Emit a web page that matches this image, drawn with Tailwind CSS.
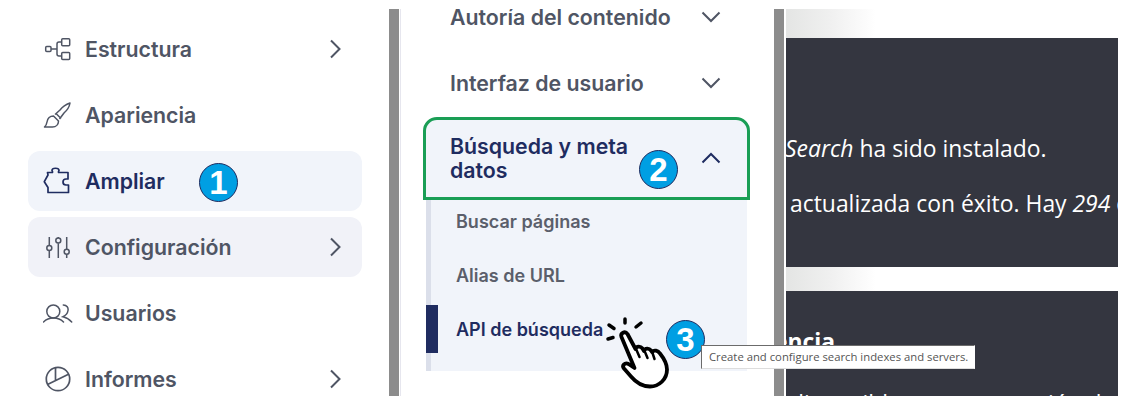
<!DOCTYPE html>
<html><head><meta charset="utf-8"><script src="https://cdn.jsdelivr.net/npm/@tailwindcss/browser@4"></script></head>
<body class="bg-white overflow-hidden font-['Inter',sans-serif]">
<div class="relative w-[1133px] h-[405px] pt-[9px]">
<div class="flex h-[387px] overflow-hidden">
  <!-- left -->
  <nav class="w-[389px] shrink-0 pt-[10px] pl-[28px] pr-[27px] flex flex-col gap-[6px] text-[21.3px] font-semibold text-[#4f5564]">
    <div class="h-[60px] shrink-0 rounded-[12px] flex items-center pl-[15px] pr-[19px]">
      <svg class="w-[28px] h-[28px] mr-[14px] shrink-0" viewBox="0 0 28 28" fill="none" stroke="#4f5564" stroke-width="1.5"><rect x="2.7" y="11.5" width="5.300" height="5" rx="1"/><path d="M8 14H14M18.700 7h-2.700a2 2 0 0 0-2 2v10a2 2 0 0 0 2 2h2.700"/><rect x="18.700" y="3.800" width="8" height="7" rx="1"/><rect x="18.700" y="17.500" width="8" height="7" rx="1"/></svg>
      <span class="flex-1 pt-[2px]">Estructura</span>
      <svg class="w-[14px] h-[20px]" viewBox="0 0 14 20" fill="none" stroke="#4f5564" stroke-width="2"><path d="M2 1.500 10.500 10 2 18.500"/></svg>
    </div>
    <div class="h-[60px] shrink-0 rounded-[12px] flex items-center pl-[15px] pr-[19px]">
      <svg class="w-[28px] h-[28px] mr-[14px] shrink-0" viewBox="0 0 28 28" fill="none" stroke="#4f5564" stroke-width="1.500" stroke-linejoin="round"><path d="M1.500 26h8c3.500 0 6-2.500 6-6l-5-5c-4 0-6 3-6.500 6-.3 2-1 3.500-2.500 5Z"/><path d="M12 13.500 17 9c3-4 7-6 10-7-.5 3-2.500 7-6 10l-4.500 6M13 12.500l5 5"/></svg>
      <span class="flex-1 pt-[2px]">Apariencia</span>
    </div>
    <div class="relative h-[60px] shrink-0 rounded-[12px] bg-[#f1f4fa] text-[#1f2c60] flex items-center pl-[15px] pr-[19px]">
      <svg class="w-[28px] h-[28px] mr-[14px] shrink-0" viewBox="0 0 28 28" fill="none" stroke="#1f2c60" stroke-width="1.700" stroke-linejoin="round"><path d="M4.500 5.500h5c.5-.5-.5-1.500-.5-2 0-3 7-3 7 0 0 .5-1 1.500-.5 2h9.500v6.500h-2c-3 0-3 2.500-3 3s0 3 3 3h2.500v7.500H5v-5L1.300 14.700 5 8Z"/></svg>
      <span class="flex-1 pt-[2px]">Ampliar</span>
    </div>
    <div class="h-[60px] shrink-0 rounded-[12px] bg-[#f1f2f8] flex items-center pl-[15px] pr-[19px]">
      <svg class="w-[28px] h-[28px] mr-[14px] shrink-0" viewBox="0 0 28 28" fill="none" stroke="#4f5564" stroke-width="1.500"><path d="M6.300 4v8.500M6.300 17.500V25M15.300 4v1M15.300 10.200V25M23.700 4v12.200M23.700 21.200V25"/><circle cx="6.300" cy="15" r="2.500"/><circle cx="15.300" cy="7.600" r="2.500"/><circle cx="23.700" cy="18.700" r="2.500"/></svg>
      <span class="flex-1 pt-[2px]">Configuración</span>
      <svg class="w-[14px] h-[20px]" viewBox="0 0 14 20" fill="none" stroke="#4f5564" stroke-width="2"><path d="M2 1.500 10.500 10 2 18.500"/></svg>
    </div>
    <div class="h-[60px] shrink-0 rounded-[12px] flex items-center pl-[15px] pr-[19px]">
      <svg class="w-[30px] h-[22px] mr-[12px] shrink-0" viewBox="0 0 30 22" fill="none" stroke="#4f5564" stroke-width="1.500" stroke-linecap="round"><circle cx="10.300" cy="9.500" r="6.500"/><path d="M.5 20C3 17.500 6 16 10.500 16S18 17.500 20.500 20M20.300 3C24 3 25.500 6 25 8.500 24.600 11.500 22.500 13.500 20 14.700 23.500 15.500 26 17 28.700 20"/></svg>
      <span class="flex-1 pt-[2px]">Usuarios</span>
    </div>
    <div class="h-[60px] shrink-0 rounded-[12px] flex items-center pl-[15px] pr-[19px]">
      <svg class="w-[28px] h-[28px] mr-[14px] shrink-0" viewBox="0 0 28 28" fill="none" stroke="#4f5564" stroke-width="1.700"><circle cx="15" cy="14" r="11.700"/><path d="M4.500 19.500 26 9M12.500 2.800V15.300"/></svg>
      <span class="flex-1 pt-[2px]">Informes</span>
      <svg class="w-[14px] h-[20px]" viewBox="0 0 14 20" fill="none" stroke="#4f5564" stroke-width="2"><path d="M2 1.500 10.500 10 2 18.500"/></svg>
    </div>
  </nav>
  <div class="w-[10px] shrink-0 bg-[#8c8c8c]"></div>
  <!-- middle -->
  <section class="w-[375px] shrink-0 border-l border-[#e6e6ee] ml-[1px] -mr-[1px] pl-[22px] text-[21.3px] font-semibold text-[#4f5564]">
    <div class="w-[327px] -mt-[22px]">
      <div class="h-[60px] flex items-center pl-[27px] pr-[29px] mb-[6px] whitespace-nowrap">
        <span class="flex-1 pt-[2px]">Autoría del contenido</span>
        <svg class="w-[20px] h-[12px]" viewBox="0 0 20 12" fill="none" stroke="#4f5564" stroke-width="2"><path d="M1.500 1.500 10 10l8.500-8.500"/></svg>
      </div>
      <div class="h-[60px] flex items-center pl-[27px] pr-[29px] mb-[4px]">
        <span class="flex-1 pt-[2px]">Interfaz de usuario</span>
        <svg class="w-[20px] h-[12px]" viewBox="0 0 20 12" fill="none" stroke="#4f5564" stroke-width="2"><path d="M1.500 1.500 10 10l8.500-8.500"/></svg>
      </div>
      <div class="h-[83px] rounded-t-[14px] border-[3px] border-[#1a9e55] bg-[#f1f4fa] text-[#1f2c60] flex items-center pl-[24px] pr-[26px] pb-[2px] leading-[24px] whitespace-nowrap">
        <span class="flex-1">Búsqueda y meta<br>datos</span>
        <svg class="w-[20px] h-[12px]" viewBox="0 0 20 12" fill="none" stroke="#1f2c60" stroke-width="2"><path d="M1.500 10.500 10 2l8.500 8.500"/></svg>
      </div>
      <div class="relative mx-[3px] h-[171px] bg-[#f1f4fa] border-l-[5px] border-[#dbdfea] text-[18px] text-[#5b5f6b]">
        <div class="-translate-y-[6px]">
          <div class="h-[54px] flex items-center pl-[25px]">Buscar páginas</div>
          <div class="h-[54px] flex items-center pl-[25px]">Alias de URL</div>
          <div class="h-[54px] flex items-center pl-[25px] text-[#1f2c60]">API de búsqueda</div>
        </div>
        <div class="absolute -left-[5px] top-[105px] w-[12px] h-[48px] bg-[#1f2c60]"></div>
      </div>
    </div>
  </section>
  <div class="w-[10px] shrink-0 bg-[#8c8c8c]"></div>
  <!-- right -->
  <section class="w-[334px] shrink-0 pl-[2px] font-['Open_Sans',sans-serif] text-white">
    <div class="w-[90px] h-[29px] bg-gradient-to-r from-[#e4e5e4] via-[#f0f0f0] to-white"></div>
    <div class="h-[229px] bg-[#343640] overflow-hidden relative whitespace-nowrap text-[22.9px] leading-[30px] pt-[96px]">
      <p class="-ml-[1px]"><i>Search</i> ha sido instalado.</p>
      <p class="mt-[25px] ml-[4px]">actualizada con éxito. Hay <i>294</i> d</p>
    </div>
    <div class="w-[90px] h-[24px] bg-gradient-to-r from-[#e4e5e4] via-[#f0f0f0] to-white"></div>
    <div class="h-[105px] bg-[#343640] overflow-hidden whitespace-nowrap text-[22.9px] leading-[30px] pt-[36px]">
      <p class="font-bold -ml-[12px]">encia</p>
      <p class="mt-[32px] ml-[4px]">disponibles para su versión de</p>
    </div>
  </section>
</div>
<!-- badges -->
<div class="absolute left-[199px] top-[163px] w-[39px] h-[39px] rounded-full bg-[#009fe3] border border-[#1f2c60] flex items-center justify-center text-white font-bold text-[33px] font-['Liberation_Sans',sans-serif]">1</div>
<div class="absolute left-[639px] top-[150px] w-[39px] h-[39px] rounded-full bg-[#009fe3] border border-[#1f2c60] flex items-center justify-center text-white font-bold text-[33px] font-['Liberation_Sans',sans-serif]">2</div>
<div class="absolute left-[666px] top-[320px] w-[39px] h-[39px] rounded-full bg-[#009fe3] border border-[#1f2c60] flex items-center justify-center text-white font-bold text-[33px] font-['Liberation_Sans',sans-serif]">3</div>
<!-- tooltip -->
<div class="absolute left-[701px] top-[345px] w-[274px] h-[24px] bg-white border border-[#6b6b6b] border-r-white border-b-[#ddd] flex items-center pl-[7px] whitespace-nowrap text-[11.3px] text-[#555] font-['Open_Sans',sans-serif]">Create and configure search indexes and servers.</div>
<!-- hand -->
<svg class="absolute left-[600px] top-[315px] w-[75px] h-[75px]" viewBox="0 0 75 75" fill="none">
<path d="M21.500 22c-1.500-4 3.500-6.500 6-3l8 15c1-3 5-3 7-.5l1.500 2.500c1-3 5-3 7-.5l1 1.500c2-2.500 6-1.500 8 1.500 4 5 7 10 7 16 0 10-8 17-17 17-8 0-14-4-19-10l-7-8c-2.500-3 1-6.500 4.500-4.500l6 4Z" fill="#fff" stroke="#000" stroke-width="3.800" stroke-linejoin="round"/>
<path d="M36.500 35 39.500 42M45 37l2.500 6M52.500 38l2 6" stroke="#000" stroke-width="2.500" stroke-linecap="round"/>
<path d="M9 10l5 3.500M25 4v4M41 8l-5 4M8 24l5-1.500" stroke="#000" stroke-width="3.500" stroke-linecap="round"/>
</svg>
</div>
</body></html>
